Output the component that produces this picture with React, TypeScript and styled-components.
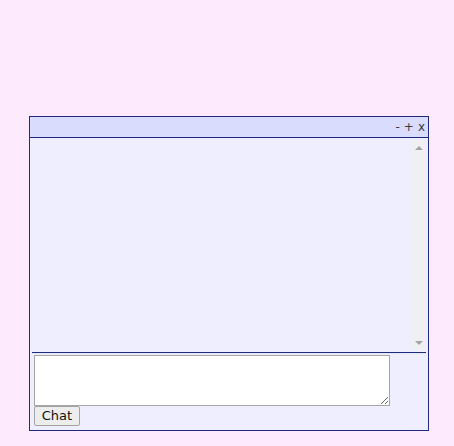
import { createGlobalStyle } from "styled-components";
import styled from "styled-components";

const GlobalStyle = createGlobalStyle`
  html, body {
    margin: 0;
    padding: 0;
    background-color: #fdebfd;
    font-family: "DejaVu Sans", Verdana, sans-serif;
  }
`;

const Page = styled.div`
  padding: 116px 0 0 29px;
`;

const ChatBox = styled.div`
  width: 398px;
  border: 1px solid #1f2a7a;
  background-color: #eeeeff;
`;

const Header = styled.div`
  height: 20px;
  background-color: #d9dcfc;
  border-bottom: 1px solid #1f2a7a;
  display: flex;
  justify-content: flex-end;
  align-items: center;
  padding-right: 3px;
`;

const Controls = styled.div`
  display: flex;
  gap: 4px;
  font-size: 12px;
  color: #3a3a3a;
`;

const Control = styled.span`
  cursor: pointer;
`;

const Body = styled.div`
  padding: 2px 2px 4px 2px;
`;

const Messages = styled.div`
  height: 210px;
  display: flex;
`;

const MessageList = styled.div`
  flex: 1;
  overflow: hidden;
  font-size: 12px;
`;

const ScrollTrack = styled.div`
  width: 15px;
  background-color: #f0f0f3;
  display: flex;
  flex-direction: column;
  justify-content: space-between;
`;

const ScrollArrow = styled.div<{ $dir: "up" | "down" }>`
  width: 15px;
  height: 15px;
  display: flex;
  align-items: center;
  justify-content: center;

  &::after {
    content: "";
    width: 0;
    height: 0;
    border-left: 4px solid transparent;
    border-right: 4px solid transparent;
    ${({ $dir }) =>
      $dir === "up"
        ? "border-bottom: 4px solid #a3a3a3;"
        : "border-top: 4px solid #a3a3a3;"}
  }
`;

const Divider = styled.hr`
  margin: 2px 0 1px 0;
  border: none;
  border-top: 1px solid #1f2a7a;
  border-bottom: 1px solid #e4e8ff;
  height: 0;
`;

const Input = styled.textarea`
  display: block;
  box-sizing: border-box;
  width: 356px;
  height: 51px;
  margin: 0 0 0 2px;
  border: 1px solid #a6a6a6;
  background-color: #fff;
  font-family: "DejaVu Sans", Verdana, sans-serif;
  font-size: 12px;
  padding: 2px;
`;

const SendButton = styled.button`
  display: block;
  box-sizing: border-box;
  height: 20px;
  width: 46px;
  margin: 0 0 0 2px;
  padding: 0;
  background-color: #ededed;
  border: 1px solid #a3a3a3;
  border-radius: 2px;
  font-family: "DejaVu Sans", Verdana, sans-serif;
  font-size: 13px;
  color: #111;
  line-height: 16px;
`;

export default function App() {
  return (
    <>
      <GlobalStyle />
      <Page>
        <ChatBox>
          <Header>
            <Controls>
              <Control>-</Control>
              <Control>+</Control>
              <Control>x</Control>
            </Controls>
          </Header>
          <Body>
            <Messages>
              <MessageList />
              <ScrollTrack>
                <ScrollArrow $dir="up" />
                <ScrollArrow $dir="down" />
              </ScrollTrack>
            </Messages>
            <Divider />
            <Input />
            <SendButton>Chat</SendButton>
          </Body>
        </ChatBox>
      </Page>
    </>
  );
}
